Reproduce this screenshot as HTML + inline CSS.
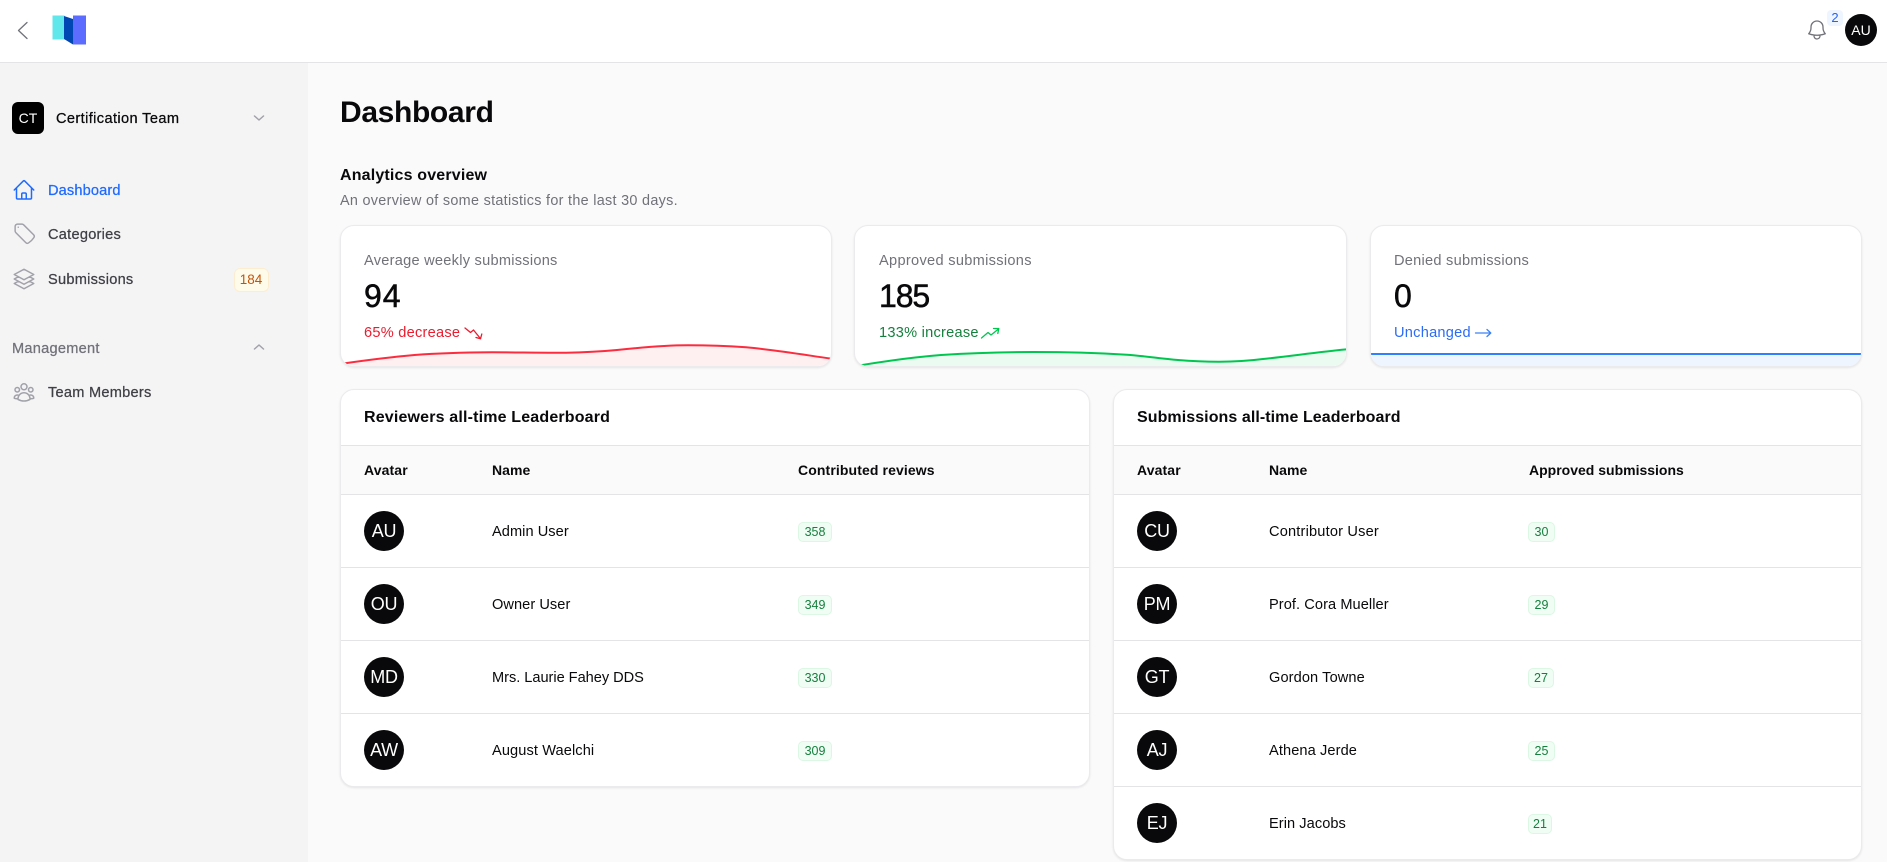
<!DOCTYPE html>
<html lang="en"><head><meta charset="utf-8"><title>Dashboard</title>
<style>
*{box-sizing:border-box}
html,body{margin:0;padding:0;width:1887px;height:862px;overflow:hidden;background:#fafafa;font-family:"Liberation Sans",sans-serif;color:#09090b}
.t{position:absolute;white-space:nowrap;line-height:20px;font-size:14.6px;letter-spacing:.1px}
.n{letter-spacing:.05px}
.m{-webkit-text-stroke:.25px currentColor}
.b{font-weight:700}
.g{color:#71717a}
.a{position:absolute}
.card{position:absolute;background:#fff;border:1px solid #ebebee;border-radius:14px;box-shadow:0 1px 2px rgba(0,0,0,.09);overflow:hidden}
.av{position:absolute;width:40px;height:40px;border-radius:50%;background:#09090b;color:#fff;font-size:18px;line-height:40px;text-align:center;letter-spacing:-.3px}
.pill{position:absolute;height:20px;background:#f0fdf4;border:1px solid #dcf7e4;border-radius:5px;color:#15803d;font-size:12.5px;line-height:18px;text-align:center}
.ln{position:absolute;height:1px;background:#e4e4e7}
.i{position:absolute;fill:none;stroke-width:1.5;stroke-linecap:round;stroke-linejoin:round}
.th{font-weight:700;font-size:14px;letter-spacing:.05px}
.num{font-size:32px;line-height:36px;-webkit-text-stroke:.5px #09090b}
</style></head><body>

<!-- sidebar -->
<div class="a" style="left:0;top:62px;width:308px;height:800px;background:#f4f4f5"></div>
<!-- header -->
<div class="a" style="left:0;top:0;width:1887px;height:63px;background:#fff;border-bottom:1px solid #e4e4e7"></div>

<svg class="i" style="left:12px;top:18px;stroke:#71717a;stroke-width:1.3" width="24" height="24" viewBox="0 0 24 24"><path d="M15 4.500 L6.500 12.500 L15 20.500"/></svg>
<svg class="a" style="left:50px;top:12px" width="40" height="36" viewBox="50 12 40 36">
<rect x="52.500" y="15.500" width="12" height="24" fill="#5fe7ec"/>
<rect x="73" y="15.500" width="13" height="29" fill="#5b6cff"/>
<polygon points="64,16 73,19 73,44.500 64,39" fill="#0047b3"/>
</svg>

<svg class="i" style="left:1804.500px;top:18px;stroke:#71717a;stroke-width:1.3" width="24" height="24" viewBox="0 0 24 24"><path d="M14.857 17.082a23.848 23.848 0 005.454-1.31A8.967 8.967 0 0118 9.750v-.700V9A6 6 0 006 9v.750a8.967 8.967 0 01-2.312 6.022c1.733.640 3.560 1.085 5.455 1.310m5.714 0a24.255 24.255 0 01-5.714 0m5.714 0a3 3 0 11-5.714 0"/></svg>
<div class="a" style="left:1827px;top:10px;width:16px;height:16px;background:#eff5ff;border-radius:4px;color:#2563eb;font-size:13px;line-height:16px;text-align:center">2</div>
<div class="a" style="left:1845px;top:14px;width:32px;height:32px;border-radius:50%;background:#09090b;color:#fff;font-size:14px;line-height:32px;text-align:center">AU</div>

<!-- team -->
<div class="a" style="left:12px;top:102px;width:32px;height:32px;border-radius:6px;background:#000;color:#fff;font-size:14px;line-height:32px;text-align:center">CT</div>
<div class="t m" style="left:56px;top:109px;letter-spacing:.38px">Certification Team</div>
<svg class="i" style="left:251px;top:110px;stroke:#a1a1aa" width="16" height="16" viewBox="0 0 16 16"><path d="M3.500 6 L8 10 L12.500 6"/></svg>

<!-- nav -->
<svg class="i" style="left:12px;top:178px;stroke:#1f6bff" width="24" height="24" viewBox="0 0 24 24"><path d="M2.250 12l8.954-8.955c.44-.439 1.152-.439 1.591 0L21.750 12M4.500 9.750v10.125c0 .621.504 1.125 1.125 1.125H9.750v-4.875c0-.621.504-1.125 1.125-1.125h2.250c.621 0 1.125.504 1.125 1.125V21h4.125c.621 0 1.125-.504 1.125-1.125V9.750M8.250 21h8.250"/></svg>
<div class="t m" style="left:48px;top:181px;color:#1f6bff;letter-spacing:.14px">Dashboard</div>

<svg class="i" style="left:11.500px;top:221px;stroke:#a1a1aa;stroke-width:1.4" width="25" height="25" viewBox="0 0 24 24"><path d="M9.568 3H5.250A2.250 2.250 0 003 5.250v4.318c0 .597.237 1.170.659 1.591l9.581 9.581c.699.699 1.780.872 2.607.330a18.095 18.095 0 005.223-5.223c.542-.827.369-1.908-.330-2.607L11.160 3.660A2.250 2.250 0 009.568 3z"/><path d="M6 6h.008v.008H6V6z"/></svg>
<div class="t m" style="left:48px;top:225px;color:#3f3f46;letter-spacing:.25px">Categories</div>

<svg class="i" style="left:12px;top:266.500px;stroke:#a1a1aa" width="24" height="24" viewBox="0 0 24 24"><path d="M6.429 9.750L2.250 12l4.179 2.250m0-4.500l5.571 3 5.571-3m-11.142 0L2.250 7.500 12 2.250l9.750 5.250-4.179 2.250m0 0L21.750 12l-4.179 2.250m0 0l4.179 2.250L12 21.750 2.250 16.500l4.179-2.250m11.142 0l-5.571 3-5.571-3"/></svg>
<div class="t m" style="left:48px;top:269.500px;color:#3f3f46;letter-spacing:.25px">Submissions</div>
<div class="a" style="left:233.500px;top:268px;width:35px;height:24px;background:#fffbeb;border:1px solid #fdedd0;border-radius:6px;color:#c2540a;font-size:13.500px;line-height:22px;text-align:center">184</div>

<div class="t m g" style="left:12px;top:339px;letter-spacing:.25px">Management</div>
<svg class="i" style="left:251px;top:339px;stroke:#a1a1aa" width="16" height="16" viewBox="0 0 16 16"><path d="M3.500 10 L8 6 L12.500 10"/></svg>

<svg class="i" style="left:12px;top:380px;stroke:#a1a1aa" width="24" height="24" viewBox="0 0 24 24"><path d="M18 18.720a9.094 9.094 0 003.741-.479 3 3 0 00-4.682-2.720m.940 3.198l.001.031c0 .225-.012.447-.037.666A11.944 11.944 0 0112 21c-2.170 0-4.207-.576-5.963-1.584A6.062 6.062 0 016 18.719m12 0a5.971 5.971 0 00-.941-3.197m0 0A5.995 5.995 0 0012 12.750a5.995 5.995 0 00-5.058 2.772m0 0a3 3 0 00-4.681 2.720 8.986 8.986 0 003.740.477m.940-3.197a5.971 5.971 0 00-.940 3.197M15 6.750a3 3 0 11-6 0 3 3 0 016 0zm6 3a2.250 2.250 0 11-4.500 0 2.250 2.250 0 014.500 0zm-13.500 0a2.250 2.250 0 11-4.500 0 2.250 2.250 0 014.500 0z"/></svg>
<div class="t m" style="left:48px;top:383px;color:#3f3f46;letter-spacing:.25px">Team Members</div>

<!-- headings -->
<div class="t b" style="left:340px;top:93px;font-size:30px;line-height:40px;letter-spacing:-.35px">Dashboard</div>
<div class="t b" style="left:340px;top:166px;font-size:16px;letter-spacing:.17px">Analytics overview</div>
<div class="t g" style="left:340px;top:191px;font-size:14.400px;letter-spacing:.3px">An overview of some statistics for the last 30 days.</div>

<!-- stat cards -->
<div class="card" style="left:340px;top:225px;width:491.500px;height:141.500px">
<svg class="a" style="left:-1px;top:-1px" width="492" height="142" viewBox="340 225 492 142">
<path d="M340 364 C371 359.500,397 356.500,414.500 355 C442 353,467 352.500,492 352.300 C517 352.300,543 353,566.600 352.700 C584 352.400,601 351.500,617 350 C645 347,665 345.300,688 345.300 C710 345.300,728 346,746 347.300 C776 350,802 354.500,832 358.800 V367 H340 Z" fill="#fef0f1"/>
<path d="M340 364 C371 359.500,397 356.500,414.500 355 C442 353,467 352.500,492 352.300 C517 352.300,543 353,566.600 352.700 C584 352.400,601 351.500,617 350 C645 347,665 345.300,688 345.300 C710 345.300,728 346,746 347.300 C776 350,802 354.500,832 358.800" fill="none" stroke="#fb2c3e" stroke-width="2"/>
</svg></div>
<div class="t g" style="left:364px;top:251px;letter-spacing:.25px">Average weekly submissions</div>
<div class="t num" style="left:364px;top:278px;letter-spacing:1px">94</div>
<div class="t" style="left:364px;top:323px;color:#ec1b2e;letter-spacing:.25px">65% decrease</div>
<svg class="i" style="left:463px;top:325px;stroke:#ec1b2e;stroke-width:1.300" width="20" height="16" viewBox="0 0 20 16"><path d="M2 3 L7.500 7.500 L10.500 5 L17 13 M13 12.500 L17.500 13.800 L18.800 9"/></svg>

<div class="card" style="left:854px;top:225px;width:492.500px;height:141.500px">
<svg class="a" style="left:-1px;top:-1px" width="493" height="142" viewBox="854 225 493 142">
<path d="M860 365.300 C886 361,916 357,941 355 C971 353,1002 352,1033 352 C1068 352,1099 353,1127 354.700 C1145 356,1160 358.500,1178 360 C1192 361.200,1205 361.700,1219 361.700 C1234 361.700,1249 360.800,1263 359 C1291 356,1319 352,1347 349.300 V367 H860 Z" fill="#ecfbf1"/>
<path d="M860 365.300 C886 361,916 357,941 355 C971 353,1002 352,1033 352 C1068 352,1099 353,1127 354.700 C1145 356,1160 358.500,1178 360 C1192 361.200,1205 361.700,1219 361.700 C1234 361.700,1249 360.800,1263 359 C1291 356,1319 352,1347 349.300" fill="none" stroke="#00c650" stroke-width="2"/>
</svg></div>
<div class="t g" style="left:879px;top:251px;letter-spacing:.3px">Approved submissions</div>
<div class="t num" style="left:879px;top:278px;letter-spacing:-1.1px">185</div>
<div class="t" style="left:879px;top:323px;color:#15803d;letter-spacing:.25px">133% increase</div>
<svg class="i" style="left:980px;top:325px;stroke:#00c650;stroke-width:1.300" width="20" height="16" viewBox="0 0 20 16"><path d="M1.500 13 L8 7.500 L11 10 L18.500 4 M13.500 3.500 L18.800 3.500 L17.800 8.500"/></svg>

<div class="card" style="left:1370px;top:225px;width:492px;height:141.500px">
<div class="a" style="left:0;top:127px;width:100%;height:14px;background:#eef5fe"></div>
<div class="a" style="left:0;top:127px;width:100%;height:2px;background:#2f80ff"></div>
</div>
<div class="t g" style="left:1394px;top:251px;letter-spacing:.25px">Denied submissions</div>
<div class="t num" style="left:1394px;top:278px">0</div>
<div class="t" style="left:1394px;top:323px;color:#2b6cf6;letter-spacing:.25px">Unchanged</div>
<svg class="i" style="left:1474px;top:325px;stroke:#3b82f6;stroke-width:1.300" width="18" height="16" viewBox="0 0 18 16"><path d="M1.500 8 H16.500 M13 4.500 L16.800 8 L13 11.500"/></svg>

<!-- table 1 -->
<div class="card" style="left:340px;top:389px;width:750px;height:398px">
<div class="a" style="left:0;top:56px;width:100%;height:49px;background:#fafafa"></div>
<div class="ln" style="left:0;top:55px;width:100%"></div>
<div class="ln" style="left:0;top:104px;width:100%"></div>
<div class="ln" style="left:0;top:177px;width:100%"></div>
<div class="ln" style="left:0;top:250px;width:100%"></div>
<div class="ln" style="left:0;top:323px;width:100%"></div>
</div>
<div class="t b" style="left:364px;top:408px;font-size:16px;letter-spacing:.17px">Reviewers all-time Leaderboard</div>
<div class="t th" style="left:364px;top:460px;letter-spacing:.12px">Avatar</div>
<div class="t th" style="left:492px;top:460px">Name</div>
<div class="t th" style="left:798px;top:460px;letter-spacing:.11px">Contributed reviews</div>

<div class="av" style="left:364px;top:511px">AU</div>
<div class="t n" style="left:492px;top:522px">Admin User</div>
<div class="pill" style="left:798px;top:522px;width:34px">358</div>
<div class="av" style="left:364px;top:584px">OU</div>
<div class="t n" style="left:492px;top:595px">Owner User</div>
<div class="pill" style="left:798px;top:595px;width:34px">349</div>
<div class="av" style="left:364px;top:657px">MD</div>
<div class="t" style="left:492px;top:668px;letter-spacing:-.03px">Mrs. Laurie Fahey DDS</div>
<div class="pill" style="left:798px;top:668px;width:34px">330</div>
<div class="av" style="left:364px;top:730px">AW</div>
<div class="t" style="left:492px;top:741px;letter-spacing:.1px">August Waelchi</div>
<div class="pill" style="left:798px;top:741px;width:34px">309</div>

<!-- table 2 -->
<div class="card" style="left:1113px;top:389px;width:749px;height:471px">
<div class="a" style="left:0;top:56px;width:100%;height:49px;background:#fafafa"></div>
<div class="ln" style="left:0;top:55px;width:100%"></div>
<div class="ln" style="left:0;top:104px;width:100%"></div>
<div class="ln" style="left:0;top:177px;width:100%"></div>
<div class="ln" style="left:0;top:250px;width:100%"></div>
<div class="ln" style="left:0;top:323px;width:100%"></div>
<div class="ln" style="left:0;top:396px;width:100%"></div>
</div>
<div class="t b" style="left:1137px;top:408px;font-size:16px;letter-spacing:.07px">Submissions all-time Leaderboard</div>
<div class="t th" style="left:1137px;top:460px;letter-spacing:.12px">Avatar</div>
<div class="t th" style="left:1269px;top:460px">Name</div>
<div class="t th" style="left:1529px;top:460px;letter-spacing:0">Approved submissions</div>

<div class="av" style="left:1137px;top:511px">CU</div>
<div class="t" style="left:1269px;top:522px;letter-spacing:.18px">Contributor User</div>
<div class="pill" style="left:1528px;top:522px;width:27px">30</div>
<div class="av" style="left:1137px;top:584px">PM</div>
<div class="t" style="left:1269px;top:595px;letter-spacing:.07px">Prof. Cora Mueller</div>
<div class="pill" style="left:1528px;top:595px;width:27px">29</div>
<div class="av" style="left:1137px;top:657px">GT</div>
<div class="t" style="left:1269px;top:668px;letter-spacing:.1px">Gordon Towne</div>
<div class="pill" style="left:1528px;top:668px;width:26px">27</div>
<div class="av" style="left:1137px;top:730px">AJ</div>
<div class="t" style="left:1269px;top:741px;letter-spacing:.1px">Athena Jerde</div>
<div class="pill" style="left:1528px;top:741px;width:27px">25</div>
<div class="av" style="left:1137px;top:803px">EJ</div>
<div class="t" style="left:1269px;top:814px;letter-spacing:.06px">Erin Jacobs</div>
<div class="pill" style="left:1528px;top:814px;width:24px">21</div>

</body></html>
